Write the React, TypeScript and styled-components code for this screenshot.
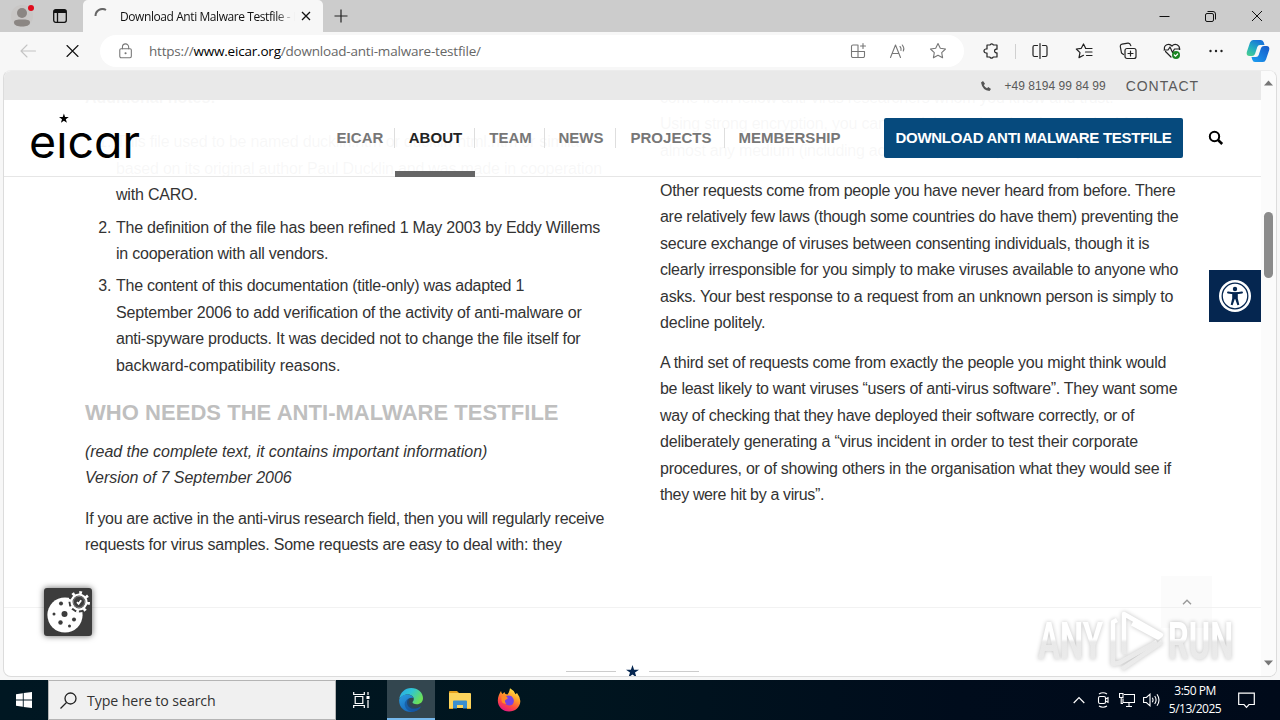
import React from "react";
import styled, { createGlobalStyle, css } from "styled-components";

const GlobalStyle = createGlobalStyle`
  *, *::before, *::after { box-sizing: border-box; }
  body { margin: 0; background: #f7f7f7; font-family: "Liberation Sans", sans-serif; }
  svg { display: block; flex: none; }
`;

const uiFont = css`font-family: "Open Sans", "Noto Sans", sans-serif;`;

const Desktop = styled.div`
  width: 1280px;
  height: 720px;
  display: flex;
  flex-direction: column;
  overflow: hidden;
  background: #f7f7f7;
`;

/* ---------- browser chrome ---------- */

const TabStrip = styled.div`
  height: 32px;
  flex: none;
  display: flex;
  background: #cccccc;
`;

const TabStripTools = styled.div`
  width: 83px;
  display: flex;
  align-items: center;
  padding-left: 11px;
  gap: 18px;
  border-radius: 0 0 4px 0;
`;

const Tab = styled.div`
  ${uiFont}
  width: 240px;
  display: flex;
  align-items: center;
  padding: 0 10px 0 11px;
  background: #f7f7f7;
  border-radius: 5px 5px 0 0;
`;

const TabTitle = styled.span`
  width: 175px;
  margin: 0 6px 0 9px;
  overflow: hidden;
  white-space: nowrap;
  font-size: 12px;
  letter-spacing: -0.42px;
  color: #111;
  -webkit-mask-image: linear-gradient(90deg, #000 155px, transparent 175px);
`;

const NewTab = styled.div`
  display: flex;
  align-items: center;
  padding-left: 11px;
`;

const WindowButtons = styled.div`
  margin-left: auto;
  display: flex;
  align-items: center;
  gap: 35px;
  padding-right: 17px;
`;

const Toolbar = styled.div`
  height: 38px;
  flex: none;
  display: flex;
  align-items: center;
  padding: 0 0 0 19px;
`;

const NavIcons = styled.div`
  width: 81px;
  display: flex;
  gap: 27px;
`;

const AddressBar = styled.div`
  ${uiFont}
  width: 864px;
  height: 32px;
  display: flex;
  align-items: center;
  padding: 0 17px 0 18px;
  border-radius: 16px;
  background: #fff;
`;

const Url = styled.span`
  margin-left: 15px;
  white-space: nowrap;
  font-size: 13.5px;
  letter-spacing: -0.2px;
  color: #676767;
  b { font-weight: 400; color: #000; }
`;

const AddressActions = styled.div`
  margin-left: auto;
  display: flex;
  gap: 22px;
`;

const ToolbarActions = styled.div`
  flex: 1;
  display: flex;
  align-items: center;
  gap: 26px;
  padding-left: 18px;
  & > :last-child { margin-left: -5px; }
`;

const ToolbarDivider = styled.i`
  width: 1px;
  height: 15px;
  flex: none;
  margin: 0 -11px;
  background: #d0d0d0;
`;

/* ---------- web page ---------- */

const Viewport = styled.div`
  position: relative;
  height: 607px;
  flex: none;
  margin: 0 3px 3px;
  display: flex;
  overflow: hidden;
  background: #fff;
  border: 1px solid #dcdcdc;
  border-top-color: #ececec;
  border-radius: 8px;
`;

const Page = styled.main`
  position: relative;
  width: 1257px;
  flex: none;
  overflow: hidden;
`;

const Columns = styled.div`
  height: 537px;
  display: grid;
  grid-template-columns: 575px 560px;
  padding: 14px 0 0 81px;
  overflow: hidden;
  border-bottom: 1px solid #f2f2f2;
  font-size: 16px;
  line-height: 26.4px;
  color: #333;
`;

const Paragraph = styled.p<{ $italic?: boolean }>`
  margin: 0 0 13.7px;
  font-style: ${(p) => (p.$italic ? "italic" : "normal")};
`;

const Line = styled.span<{ $track: number }>`
  display: block;
  white-space: nowrap;
  letter-spacing: ${(p) => p.$track}px;
`;

const NotesTitle = styled.div`
  font-weight: 700;
  margin-bottom: 18px;
`;

const Notes = styled.ol`
  margin: 0 0 20px;
  padding-left: 31px;
  li { margin-bottom: 6px; }
`;

const SectionTitle = styled.h2`
  margin: 0 0 12px;
  white-space: nowrap;
  font-size: 22px;
  line-height: 28px;
  font-weight: 700;
  letter-spacing: 0.04px;
  color: #bfbfbf;
`;

const StarDivider = styled.div`
  display: flex;
  justify-content: center;
  align-items: center;
  gap: 10px;
  padding-top: 57px;
  i { width: 50px; height: 1px; background: #ccc; }
`;

const SiteHeader = styled.header`
  position: absolute;
  top: 0;
  left: 0;
  right: 0;
`;

const ContactBar = styled.div`
  height: 29px;
  display: flex;
  align-items: center;
  justify-content: flex-end;
  padding-right: 62px;
  background: #e9e9e9;
  color: #5a5a5a;
`;

const Phone = styled.span`
  margin: 0 20px 0 13px;
  font-size: 12px;
  letter-spacing: 0.05px;
`;

const ContactLink = styled.span`
  font-size: 14px;
  letter-spacing: 0.95px;
`;

const NavBar = styled.div`
  height: 77px;
  display: flex;
  align-items: center;
  padding-left: 26px;
  background: rgba(255, 255, 255, 0.965);
  border-bottom: 1px solid #e6e6e6;
`;

const Brand = styled.div`
  width: 294px;
  height: 100%;
  padding-top: 13px;
`;

const Menu = styled.nav`
  height: 100%;
  display: flex;
  align-items: center;
`;

const MenuItem = styled.span<{ $active?: boolean; $width: number }>`
  position: relative;
  width: ${(p) => p.$width}px;
  height: 100%;
  display: flex;
  align-items: center;
  justify-content: center;
  padding: 0 0 1px 1px;
  font-size: 15px;
  font-weight: 700;
  letter-spacing: 0.03px;
  white-space: nowrap;
  color: ${(p) => (p.$active ? "#222" : "#777")};
  &:not(:last-child)::after {
    content: "";
    position: absolute;
    right: 0;
    top: 28px;
    width: 1px;
    height: 20px;
    background: #dedede;
  }
  ${(p) =>
    p.$active &&
    css`
      &::before {
        content: "";
        position: absolute;
        left: 0;
        right: 0;
        bottom: -1px;
        height: 6px;
        background: #666;
      }
    `}
`;

const DownloadButton = styled.span`
  width: 299px;
  height: 40px;
  margin: 0 25px 0 31px;
  padding-bottom: 1px;
  display: flex;
  align-items: center;
  justify-content: center;
  border-radius: 2px;
  background: #064a7d;
  color: #fff;
  font-size: 15px;
  font-weight: 700;
  letter-spacing: -0.28px;
  white-space: nowrap;
`;

const AccessibilityButton = styled.div`
  position: absolute;
  top: 199px;
  right: 0;
  width: 52px;
  height: 52px;
  display: grid;
  place-items: center;
  background: #052650;
`;

const CookieButton = styled.div`
  position: absolute;
  left: 40px;
  top: 517px;
  width: 48px;
  height: 48px;
  border-radius: 3px;
  background: #3c3c3c;
  box-shadow: 0 0 6px rgba(0, 0, 0, 0.6);
`;

const ScrollTop = styled.div`
  position: absolute;
  left: 1157px;
  top: 505px;
  width: 51px;
  height: 52px;
  display: grid;
  place-items: center;
  background: rgba(240, 240, 240, 0.25);
`;

const Watermark = styled.svg`
  position: absolute;
  left: 1026px;
  top: 535px;
  filter: drop-shadow(0 0 2px rgba(0, 0, 0, 0.24));
`;

const ScrollBar = styled.div`
  width: 15px;
  display: flex;
  flex-direction: column;
  align-items: center;
  justify-content: space-between;
  padding: 9px 0 10px;
  background: #fbfbfb;
`;

const Thumb = styled.i`
  width: 9px;
  height: 66px;
  margin: 0 0 257px;
  border-radius: 5px;
  background: #8b8b8b;
`;

/* ---------- taskbar ---------- */

const Taskbar = styled.div`
  ${uiFont}
  height: 40px;
  flex: none;
  display: flex;
  align-items: center;
  background: linear-gradient(90deg, #001722 0%, #00151f 45%, #000c1c 75%, #000a1a 100%);
  color: #fff;
`;

const TaskCell = styled.div<{ $active?: boolean; $width?: number }>`
  width: ${(p) => p.$width ?? 49}px;
  height: 40px;
  display: grid;
  place-items: center;
  background: ${(p) => (p.$active ? "#33464f" : "transparent")};
  box-shadow: ${(p) => (p.$active ? "inset 0 -2px 0 #76b9ed" : "none")};
`;

const SearchBox = styled.div`
  width: 288px;
  height: 40px;
  display: flex;
  align-items: center;
  gap: 10px;
  padding-left: 11px;
  border: 1px solid #b4b4b4;
  background: #f0f0f0;
  color: #333;
  font-size: 14.2px;
  letter-spacing: -0.1px;
`;

const Tray = styled.div`
  margin-left: auto;
  display: flex;
  align-items: center;
  padding-right: 25px;
`;

const TrayIcons = styled.div`
  display: flex;
  align-items: center;
  gap: 8px;
`;

const Clock = styled.div`
  width: 54px;
  margin: 0 16px 0 8px;
  text-align: center;
  white-space: nowrap;
  font-size: 12px;
  line-height: 18px;
  letter-spacing: -0.5px;
`;

type IconProps = { size?: number; color?: string; sw?: number; children: React.ReactNode };
const Icon = ({ size = 18, color = "#222", sw = 1.2, children }: IconProps) => (
  <svg width={size} height={size} viewBox="0 0 18 18" fill="none" stroke={color} strokeWidth={sw} strokeLinecap="round" strokeLinejoin="round">
    {children}
  </svg>
);

const STAR = "M9 1.5l2.3 4.8 5.2.7-3.8 3.6.9 5.2L9 13.300l-4.600 2.500.9-5.200L1.500 7l5.200-.7z";
const SOLID_STAR = "M7 0l1.700 5H14L9.700 8.200 11.300 13.300 7 10.200 2.700 13.300 4.300 8.200 0 5h5.300z";

const menu: [string, number, boolean?][] = [
  ["EICAR", 71],
  ["ABOUT", 80, true],
  ["TEAM", 70],
  ["NEWS", 71],
  ["PROJECTS", 109],
  ["MEMBERSHIP", 128],
];

/* Each line carries its own letter spacing. */
type TextLine = [text: string, track: number];
const Lines = ({ lines }: { lines: TextLine[] }) => (
  <>
    {lines.map(([text, track]) => (
      <Line key={text} $track={track}>{text}</Line>
    ))}
  </>
);

const notes: TextLine[][] = [
  [
    ["This file used to be named ducklin.htm or ducklin-html.htm or similar", -0.2],
    ["based on its original author Paul Ducklin and was made in cooperation", -0.19],
    ["with CARO.", -0.2],
  ],
  [
    ["The definition of the file has been refined 1 May 2003 by Eddy Willems", -0.225],
    ["in cooperation with all vendors.", -0.23],
  ],
  [
    ["The content of this documentation (title-only) was adapted 1", -0.27],
    ["September 2006 to add verification of the activity of anti-malware or", -0.185],
    ["anti-spyware products. It was decided not to change the file itself for", -0.235],
    ["backward-compatibility reasons.", -0.11],
  ],
];

const intro: TextLine[] = [
  ["(read the complete text, it contains important information)", -0.04],
  ["Version of 7 September 2006", -0.03],
];

const body: TextLine[] = [
  ["If you are active in the anti-virus research field, then you will regularly receive", -0.315],
  ["requests for virus samples. Some requests are easy to deal with: they", -0.245],
];

const rightText: TextLine[][] = [
  [
    ["come from fellow anti-virus researchers whom you know and trust.", -0.25],
    ["Using strong encryption, you can send them what they have asked for by", -0.2],
    ["almost any medium (including across the Internet) without any real risk.", -0.25],
  ],
  [
    ["Other requests come from people you have never heard from before. There", -0.265],
    ["are relatively few laws (though some countries do have them) preventing the", -0.3],
    ["secure exchange of viruses between consenting individuals, though it is", -0.25],
    ["clearly irresponsible for you simply to make viruses available to anyone who", -0.25],
    ["asks. Your best response to a request from an unknown person is simply to", -0.257],
    ["decline politely.", -0.18],
  ],
  [
    ["A third set of requests come from exactly the people you might think would", -0.275],
    ["be least likely to want viruses “users of anti-virus software”. They want some", -0.285],
    ["way of checking that they have deployed their software correctly, or of", -0.27],
    ["deliberately generating a “virus incident in order to test their corporate", -0.2],
    ["procedures, or of showing others in the organisation what they would see if", -0.255],
    ["they were hit by a virus”.", -0.36],
  ],
];

const BrowserTabs = () => (
  <TabStrip>
    <TabStripTools>
      <svg width="24" height="24" viewBox="0 0 24 24">
        <circle cx="11" cy="12" r="11" fill="#c6c2bf" opacity=".5" />
        <circle cx="11" cy="9" r="5" fill="#8b8683" />
        <path d="M3 18.500c0-3 3.500-3 8-3s8 0 8 3-4 4-8 4-8-1-8-4z" fill="#8b8683" />
        <circle cx="20" cy="4" r="3" fill="#e00b1c" />
      </svg>
      <svg width="14" height="14" viewBox="0 0 14 14" fill="none" stroke="#111" strokeWidth="1.300">
        <rect x=".7" y=".7" width="12.600" height="12.600" rx="2" />
        <path d="M1 2.500h12" strokeWidth="3" />
        <path d="M4.500 3v10" />
      </svg>
    </TabStripTools>
    <Tab>
      <svg width="17" height="16" viewBox="0 0 17 16" fill="none" stroke="#666" strokeWidth="2">
        <path d="M1.500 8A7 7 0 0 1 12 2" />
      </svg>
      <TabTitle>Download Anti Malware Testfile - EICAR</TabTitle>
      <svg width="10" height="10" viewBox="0 0 10 10" stroke="#111" strokeWidth="1.300"><path d="M1 1l8 8M9 1l-8 8" /></svg>
    </Tab>
    <NewTab>
      <svg width="14" height="14" viewBox="0 0 14 14" stroke="#222" strokeWidth="1.200"><path d="M7 .5v13M.5 7h13" /></svg>
    </NewTab>
    <WindowButtons>
      <svg width="11" height="11" viewBox="0 0 11 11" stroke="#111"><path d="M.5 5.500h10" /></svg>
      <svg width="11" height="11" viewBox="0 0 11 11" fill="none" stroke="#111"><rect x=".5" y="2.500" width="8" height="8" rx="1.500" /><path d="M2.500.5H8A2.500 2.500 0 0 1 10.500 3v5.500" /></svg>
      <svg width="12" height="12" viewBox="0 0 12 12" stroke="#111"><path d="M1 1l10 10M11 1L1 11" /></svg>
    </WindowButtons>
  </TabStrip>
);

const BrowserToolbar = () => (
  <Toolbar>
    <NavIcons>
      <Icon color="#c4c4c4" sw={1.1}><path d="M16.500 9H2M8 3L2 9l6 6" /></Icon>
      <Icon color="#111" sw={1.1}><path d="M3 3.500l11 11M14 3.500l-11 11" /></Icon>
    </NavIcons>
    <AddressBar>
      <Icon size={16} color="#777"><rect x="2" y="6.500" width="13" height="10" rx="1.500" /><path d="M5 6.500V4.500a3.500 3.500 0 0 1 7 0v2" /><circle cx="8.500" cy="11.500" r=".6" fill="#777" /></Icon>
      <Url>https://<b>www.eicar.org</b>/download-anti-malware-testfile/</Url>
      <AddressActions>
        <Icon color="#777" sw={1.1}><path d="M8.500 3H4a1.500 1.500 0 0 0-1.500 1.500V14A1.500 1.500 0 0 0 4 15.500h10a1.500 1.500 0 0 0 1.500-1.500V9.500h-13M9 3v12.500M14 1.500v5M11.500 4h5" /></Icon>
        <Icon color="#777" sw={1.1}><path d="M1.500 15.500L6.500 3l5 12.500M3.300 11.500h6.400M11 4.500q1.500 1.500 1 4M13.300 3q2.500 3 1 6" /></Icon>
        <Icon color="#777" sw={1.1}><path d={STAR} /></Icon>
      </AddressActions>
    </AddressBar>
    <ToolbarActions>
      <Icon><path d="M5 3h3a1.800 1.800 0 0 1 3.400 0H15v4.200h-1a1.900 1.900 0 0 0 0 3.700h1V15h-3.800a1.800 1.800 0 0 1-3.400 0H5v-4H4a2 2 0 0 1 0-4h1z" /></Icon>
      <ToolbarDivider />
      <Icon><path d="M6.500 3.500h-3A1.500 1.500 0 0 0 2 5v8a1.500 1.500 0 0 0 1.500 1.500h3M11.500 3.500h3A1.500 1.500 0 0 1 16 5v8a1.500 1.500 0 0 1-1.500 1.500h-3M9 1.500v15" /></Icon>
      <Icon><path d="M10.500 6L8.500 2 6.300 6.300l-5 .7L5 10.600l-1 5 4.500-2.300M10.500 6.500h6.500M10.500 10H17M11.500 13.500H17" /></Icon>
      <Icon><rect x="6" y="6.500" width="11" height="10" rx="2" /><path d="M11.500 9v5M9 11.500h5M4.500 12.500L2.500 11 1.300 4.500A2 2 0 0 1 3 2.200l6-1q2-.2 2.800 2.500" /></Icon>
      <Icon>
        <path d="M8 15L2.500 9.500M1.500 7.500C.5 3 6 .5 9 4c3-3.500 8-1 7.500 3.500M1 8h4l2-3 2.500 5.500L11.500 7H17" />
        <circle cx="13" cy="13" r="4" fill="#1b8523" stroke="none" /><path d="M11.300 13l1.300 1.200 2-2.200" stroke="#fff" />
      </Icon>
      <Icon><g fill="#222" stroke="none"><circle cx="3.500" cy="9" r="1.200" /><circle cx="9" cy="9" r="1.200" /><circle cx="14.500" cy="9" r="1.200" /></g></Icon>
      <svg width="24" height="24" viewBox="0 0 24 24">
        <defs>
          <linearGradient id="cpa" x1="0" y1="1" x2=".6" y2="0"><stop offset="0" stopColor="#4fd28a" /><stop offset=".5" stopColor="#23aec0" /><stop offset="1" stopColor="#1874d8" /></linearGradient>
          <linearGradient id="cpb" x1="0" y1="1" x2="1" y2="0"><stop offset="0" stopColor="#1ca0f2" /><stop offset="1" stopColor="#1658c8" /></linearGradient>
        </defs>
        <path d="M7 1h8q2 0 2.800 2.500L18.500 6H14q-2 0-2.700 2L9 15q-.7 2-3 2H3.500Q0 17 .8 13L4 3.500Q5 1 7 1z" fill="url(#cpa)" />
        <path d="M17 23H9q-2 0-2.800-2.500L5.500 18H10q2 0 2.700-2L15 9q.7-2 3-2h2.500q3.500 0 2.700 4L20 20.500q-1 2.500-3 2.500z" fill="url(#cpb)" />
      </svg>
    </ToolbarActions>
  </Toolbar>
);

const EicarPage = () => (
  <Page>
    <Columns>
      <div>
        <NotesTitle>Additional notes:</NotesTitle>
        <Notes>
          {notes.map((lines, i) => (
            <li key={i}><Lines lines={lines} /></li>
          ))}
        </Notes>
        <SectionTitle>WHO NEEDS THE ANTI-MALWARE TESTFILE</SectionTitle>
        <Paragraph $italic><Lines lines={intro} /></Paragraph>
        <Paragraph><Lines lines={body} /></Paragraph>
      </div>
      <div>
        {rightText.map((lines, i) => (
          <Paragraph key={i}><Lines lines={lines} /></Paragraph>
        ))}
      </div>
    </Columns>
    <StarDivider>
      <i />
      <svg width="13" height="13" viewBox="0 0 14 14"><path d={SOLID_STAR} fill="#052650" /></svg>
      <i />
    </StarDivider>

    <SiteHeader>
      <ContactBar>
        <svg width="10" height="10" viewBox="0 0 10 10" fill="#555"><path d="M0 1.500L2 0l2 2.800-1.200 1.400Q4 6.300 6 7.200L7.300 6 10 8 8.500 10Q1.500 9.500 0 1.500z" /></svg>
        <Phone>+49 8194 99 84 99</Phone>
        <ContactLink>CONTACT</ContactLink>
      </ContactBar>
      <NavBar>
        <Brand>
          <svg width="112" height="50" viewBox="0 0 112 50">
            <text x="-1" y="45" fontFamily="Inter, sans-serif" fontWeight="400" fontSize="45" textLength="111" lengthAdjust="spacingAndGlyphs" style={{ fontFeatureSettings: '"cv11"' }}>eıcar</text>
            <path d={SOLID_STAR} transform="translate(29 .5) scale(.7)" />
          </svg>
        </Brand>
        <Menu>
          {menu.map(([label, width, active]) => (
            <MenuItem key={label} $width={width} $active={active}>{label}</MenuItem>
          ))}
        </Menu>
        <DownloadButton>DOWNLOAD ANTI MALWARE TESTFILE</DownloadButton>
        <svg width="16" height="16" viewBox="0 0 16 16" fill="none" stroke="#000" strokeWidth="2"><circle cx="6.500" cy="6.500" r="4.700" /><path d="M9.800 9.800l4.400 4.200" strokeWidth="2.600" /></svg>
      </NavBar>
    </SiteHeader>

    <AccessibilityButton>
      <svg width="32" height="32" viewBox="0 0 32 32">
        <circle cx="16" cy="16" r="16" fill="#fff" />
        <circle cx="16" cy="16" r="12.800" fill="none" stroke="#052650" strokeWidth="1.300" />
        <circle cx="16" cy="9" r="2.200" fill="#052650" />
        <path d="M9 12.500q7 1.500 14 0" stroke="#052650" strokeWidth="1.900" fill="none" strokeLinecap="round" />
        <path d="M13.200 12.500h5.600v6l1.500 6.300-1.900.5L16.200 19h-.4l-2.200 6.300-1.900-.5 1.500-6.300z" fill="#052650" />
      </svg>
    </AccessibilityButton>

    <ScrollTop>
      <svg width="10" height="6" viewBox="0 0 10 6" fill="none" stroke="#999" strokeWidth="1.400"><path d="M1 5.200l4-4 4 4" /></svg>
    </ScrollTop>

    <CookieButton>
      <svg width="48" height="48" viewBox="0 0 48 48">
        <circle cx="21" cy="27" r="17.600" fill="#fff" />
        <g fill="#3c3c3c">
          <circle cx="17" cy="15.500" r="2" /><circle cx="10" cy="26" r="1.500" /><circle cx="20.500" cy="26" r="3" />
          <circle cx="16.500" cy="34.500" r="2.200" /><circle cx="30" cy="31.500" r="2" /><circle cx="25.500" cy="38" r="1.500" />
          <circle cx="35" cy="14" r="10.500" />
        </g>
        <circle cx="35" cy="14" r="9.500" fill="none" stroke="#fff" strokeWidth="3" strokeDasharray="2.700 4.760" />
        <circle cx="35" cy="14" r="7.500" fill="none" stroke="#fff" strokeWidth="2.200" />
        <circle cx="35" cy="14" r="5.600" fill="none" stroke="#999" strokeWidth=".7" />
        <path d="M33 14.200l1.600 1.600 2.600-3.600" fill="none" stroke="#fff" strokeWidth="1.800" />
      </svg>
    </CookieButton>

    <Watermark width="210" height="72" viewBox="0 0 210 72">
      <defs>
        <linearGradient id="wm" gradientUnits="userSpaceOnUse" x1="0" y1="0" x2="0" y2="72">
          <stop offset=".46" stopColor="#fff" />
          <stop offset=".5" stopColor="#e9e9e9" />
          <stop offset="1" stopColor="#ececec" />
        </linearGradient>
      </defs>
      <g fill="url(#wm)" fontFamily="Roboto, sans-serif" fontWeight="700" fontSize="51">
        <text x="8" y="53" textLength="65" lengthAdjust="spacingAndGlyphs">ANY</text>
        <text x="138" y="53" textLength="65" lengthAdjust="spacingAndGlyphs">RUN</text>
      </g>
      <g fill="none" stroke="url(#wm)" strokeWidth="4.500" strokeLinejoin="round">
        <path d="M94 48V8l37 21-3 2.500-26-14" />
        <path d="M87 14l-4 2v42l6-1 38-21" />
        <path d="M92 63l40-27" />
      </g>
    </Watermark>
  </Page>
);

const Scroll = () => (
  <ScrollBar>
    <svg width="9" height="6" viewBox="0 0 9 6" fill="#777"><path d="M0 5.500L4.500.5 9 5.500z" /></svg>
    <Thumb />
    <svg width="9" height="6" viewBox="0 0 9 6" fill="#777"><path d="M0 .5L4.500 5.500 9 .5z" /></svg>
  </ScrollBar>
);

const WindowsTaskbar = () => (
  <Taskbar>
    <TaskCell $width={48}>
      <svg width="16" height="16" viewBox="0 0 16 16" fill="#fff"><path d="M0 2.200L6.800 1.200V7.500H0zM7.700 1.100L16 0v7.500H7.700zM0 8.400h6.800v6.400L0 13.800zM7.700 8.400H16V16l-8.300-1.100z" /></svg>
    </TaskCell>
    <SearchBox>
      <svg width="17" height="17" viewBox="0 0 17 17" fill="none" stroke="#222" strokeWidth="1.300"><circle cx="10.500" cy="6.500" r="5.500" /><path d="M6.500 10.500L.5 16.500" /></svg>
      Type here to search
    </SearchBox>
    <TaskCell $width={51}>
      <svg width="17" height="16" viewBox="0 0 17 16" fill="none" stroke="#fff" strokeWidth="1.200"><path d="M.7 0v2.500h10.600V0M2.200 4.500h7.600v7H2.200zM.7 16v-2.500h10.600V16M15 0v3M15 8v8" /><path d="M13.500 5.500h3" strokeWidth="3" /></svg>
    </TaskCell>
    <TaskCell $active $width={48}>
      <svg width="24" height="24" viewBox="0 0 24 24">
        <defs>
          <linearGradient id="eg" x1="0" y1="0" x2="1" y2=".5"><stop offset="0" stopColor="#2aa7e8" /><stop offset=".5" stopColor="#2fc5d4" /><stop offset="1" stopColor="#6be058" /></linearGradient>
          <linearGradient id="eb" x1="0" y1="0" x2=".7" y2="1"><stop offset="0" stopColor="#2a9de0" /><stop offset="1" stopColor="#1562b8" /></linearGradient>
        </defs>
        <path d="M.2 11.500C1 4.500 6 0 12.200 0 19 0 24 4.800 24 10.300c0 3.700-2.800 6-6.200 6-3 0-4.300-1.200-4.300-2 0-.7 1.300-1.300 1.300-3.300 0-2-2-4.500-6-4.500-4.300 0-7.700 2.700-8.600 5z" fill="url(#eg)" />
        <path d="M.2 11.500C1.500 8 5 6.200 8.500 6.400c3.700.1 5.700 2 6.200 3.700-3.800-1-6.700 1-6.700 4.400 0 4.300 4 7 8.500 6.200 2.500-.4 4.200-1.500 5.400-2.200C20.500 21.500 16.500 24 12 24 5 24-.5 18.500.2 11.500z" fill="url(#eb)" />
        <path d="M10.500 10.300C6.500 11.500 5 15 6 18c1 3.300 4 5.600 7.500 5.900 3.500-.3 6.700-2.200 8.400-5.400-5 3-11 1-11.900-3.500-.2-1.700.2-3.200.5-4.700z" fill="#14488c" opacity=".55" />
      </svg>
    </TaskCell>
    <TaskCell>
      <svg width="22" height="20" viewBox="0 0 22 20">
        <path d="M0 2q0-1 1-1h7l2 2H0z" fill="#e5a11d" />
        <path d="M0 3h21q1 0 1 1v14H0z" fill="#fcd45c" />
        <path d="M4 18.500V11.500q0-1 1-1h12q1 0 1 1v7h-4V15H8v3.500z" fill="#3a8fd0" />
        <path d="M0 18h4v1H0zM18 18h4v1h-4z" fill="#e8a723" />
      </svg>
    </TaskCell>
    <TaskCell>
      <svg width="24" height="24" viewBox="0 0 24 24">
        <defs>
          <linearGradient id="ff" x1=".8" y1="0" x2=".3" y2="1"><stop offset="0" stopColor="#fff14a" /><stop offset=".4" stopColor="#ff9a28" /><stop offset=".7" stopColor="#ff4a40" /><stop offset="1" stopColor="#e31587" /></linearGradient>
        </defs>
        <path d="M4 3q.4 2 1.500 3l2-2q0 1 1 2l2 .5Q12.500 4 13 .3q4 2 5.500 6L20 5q3.500 4.500 3.300 8.500C23 19.500 18 23.500 12 23.500S.8 19 .8 12.500C.8 8.500 2.500 5.500 4 3z" fill="url(#ff)" />
        <path d="M9 8q5-1.500 7 2t-.5 6.500q-3 2-6 .3T6.500 12l3-.5z" fill="#7542e5" />
        <path d="M4.500 8.500q2-1.500 4.500-.5l2 2.200-2.500 1.500Q7 14 9.500 15.500q-4 1-5-2.500z" fill="#ff8b25" />
      </svg>
    </TaskCell>
    <Tray>
      <TrayIcons>
        <svg width="12" height="8" viewBox="0 0 12 8" fill="none" stroke="#fff" strokeWidth="1.200"><path d="M.7 7L6 1.500 11.300 7" /></svg>
        <svg width="18" height="16" viewBox="0 0 18 16" fill="none" stroke="#fff" strokeWidth="1.100"><rect x="5.500" y="4.500" width="7" height="7" rx="1.500" /><path d="M12.500 7l2.500-1.300v4.600L12.500 9M6 2q4-2.500 8 0M6 14q4 2.500 8 0" /></svg>
        <svg width="16" height="14" viewBox="0 0 16 14" fill="none" stroke="#fff" strokeWidth="1.100"><path d="M5 1.500h10.500v8H4V5.500M7 13.500h6M10 9.500v4M.5.500H4v4H.5zM2.200 4.500v6H4" /></svg>
        <svg width="17" height="14" viewBox="0 0 17 14" fill="none" stroke="#fff" strokeWidth="1.100"><path d="M.6 4.500h2.800L7 1.200v11.600L3.400 9.500H.6zM9.300 4.700q1.500 2.300 0 4.600M11.700 3q2.800 4 0 8M14 1.200q4 5.800 0 11.600" /></svg>
      </TrayIcons>
      <Clock>3:50 PM<br />5/13/2025</Clock>
      <svg width="17" height="17" viewBox="0 0 17 17" fill="none" stroke="#fff" strokeWidth="1.200"><path d="M.7 1.200h15.600v11.300H11L8.500 15.300 6 12.500H.7z" /></svg>
    </Tray>
  </Taskbar>
);

export default function App() {
  return (
    <>
      <GlobalStyle />
      <Desktop>
        <BrowserTabs />
        <BrowserToolbar />
        <Viewport>
          <EicarPage />
          <Scroll />
        </Viewport>
        <WindowsTaskbar />
      </Desktop>
    </>
  );
}
